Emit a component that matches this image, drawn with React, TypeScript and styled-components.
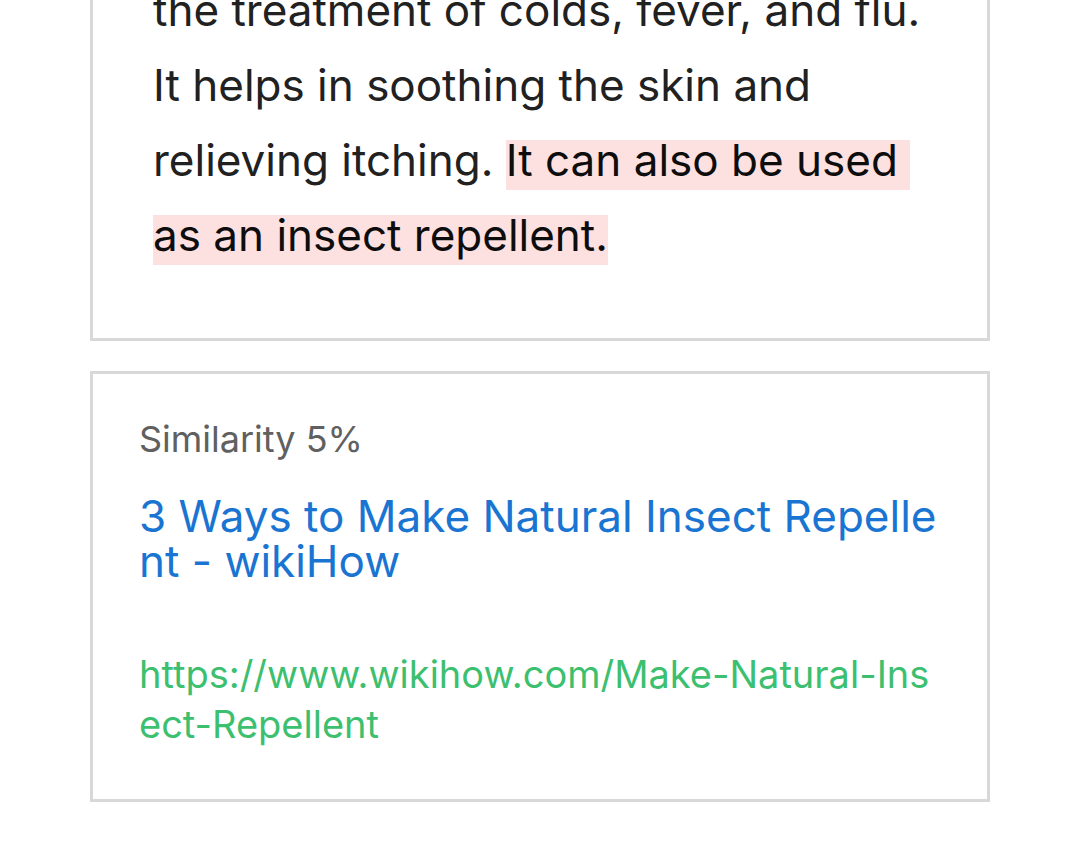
import React from "react";
import styled, { createGlobalStyle } from "styled-components";

const GlobalStyle = createGlobalStyle`
  html, body {
    margin: 0;
    padding: 0;
    background: #ffffff;
    overflow: hidden;
  }
  body {
    font-family: Inter, "Noto Sans", sans-serif;
    -webkit-font-smoothing: antialiased;
  }
`;

const Page = styled.main`
  display: flex;
  flex-direction: column;
  gap: 30px;
  width: 900px;
  margin: -30px 0 0 90px;
`;

const Card = styled.section<{ $variant: "text" | "source" }>`
  box-sizing: border-box;
  width: 100%;
  border: 3px solid #d8d8d8;
  background: #ffffff;
  padding: ${(p) => (p.$variant === "text" ? "0 60px 65px" : "43px 46px 50px")};
  display: flex;
  flex-direction: column;
`;

const Passage = styled.p`
  margin: 0;
  font-size: 44px;
  line-height: 75px;
  color: #212121;
`;

const Mark = styled.span`
  padding-bottom: 3px;
  background: linear-gradient(#fde0e0, #fde0e0) 0 7px / 100% 50px no-repeat;
  color: #0d0d0d;
`;

const Similarity = styled.div`
  font-size: 36px;
  line-height: 45px;
  color: #606060;
`;

const SourceTitle = styled.a`
  margin-top: 32px;
  font-size: 44px;
  line-height: 45px;
  color: #1a74d2;
  text-decoration: none;
  word-break: break-all;
`;

const SourceUrl = styled.a`
  margin-top: 65px;
  font-size: 38px;
  line-height: 50px;
  color: #3dbf70;
  text-decoration: none;
  word-break: break-all;
`;

export default function App() {
  return (
    <>
      <GlobalStyle />
      <Page>
        <Card $variant="text">
          <Passage>
            the treatment of colds, fever, and flu.
            <br />
            It helps in soothing the skin and
            <br />
            relieving itching. <Mark>It can also be used{"\u00a0"}</Mark>
            <br />
            <Mark>as an insect repellent.</Mark>
          </Passage>
        </Card>
        <Card $variant="source">
          <Similarity>Similarity 5%</Similarity>
          <SourceTitle href="#">3 Ways to Make Natural Insect Repellent - wikiHow</SourceTitle>
          <SourceUrl href="#">https://www.wikihow.com/Make-Natural-Insect-Repellent</SourceUrl>
        </Card>
      </Page>
    </>
  );
}
